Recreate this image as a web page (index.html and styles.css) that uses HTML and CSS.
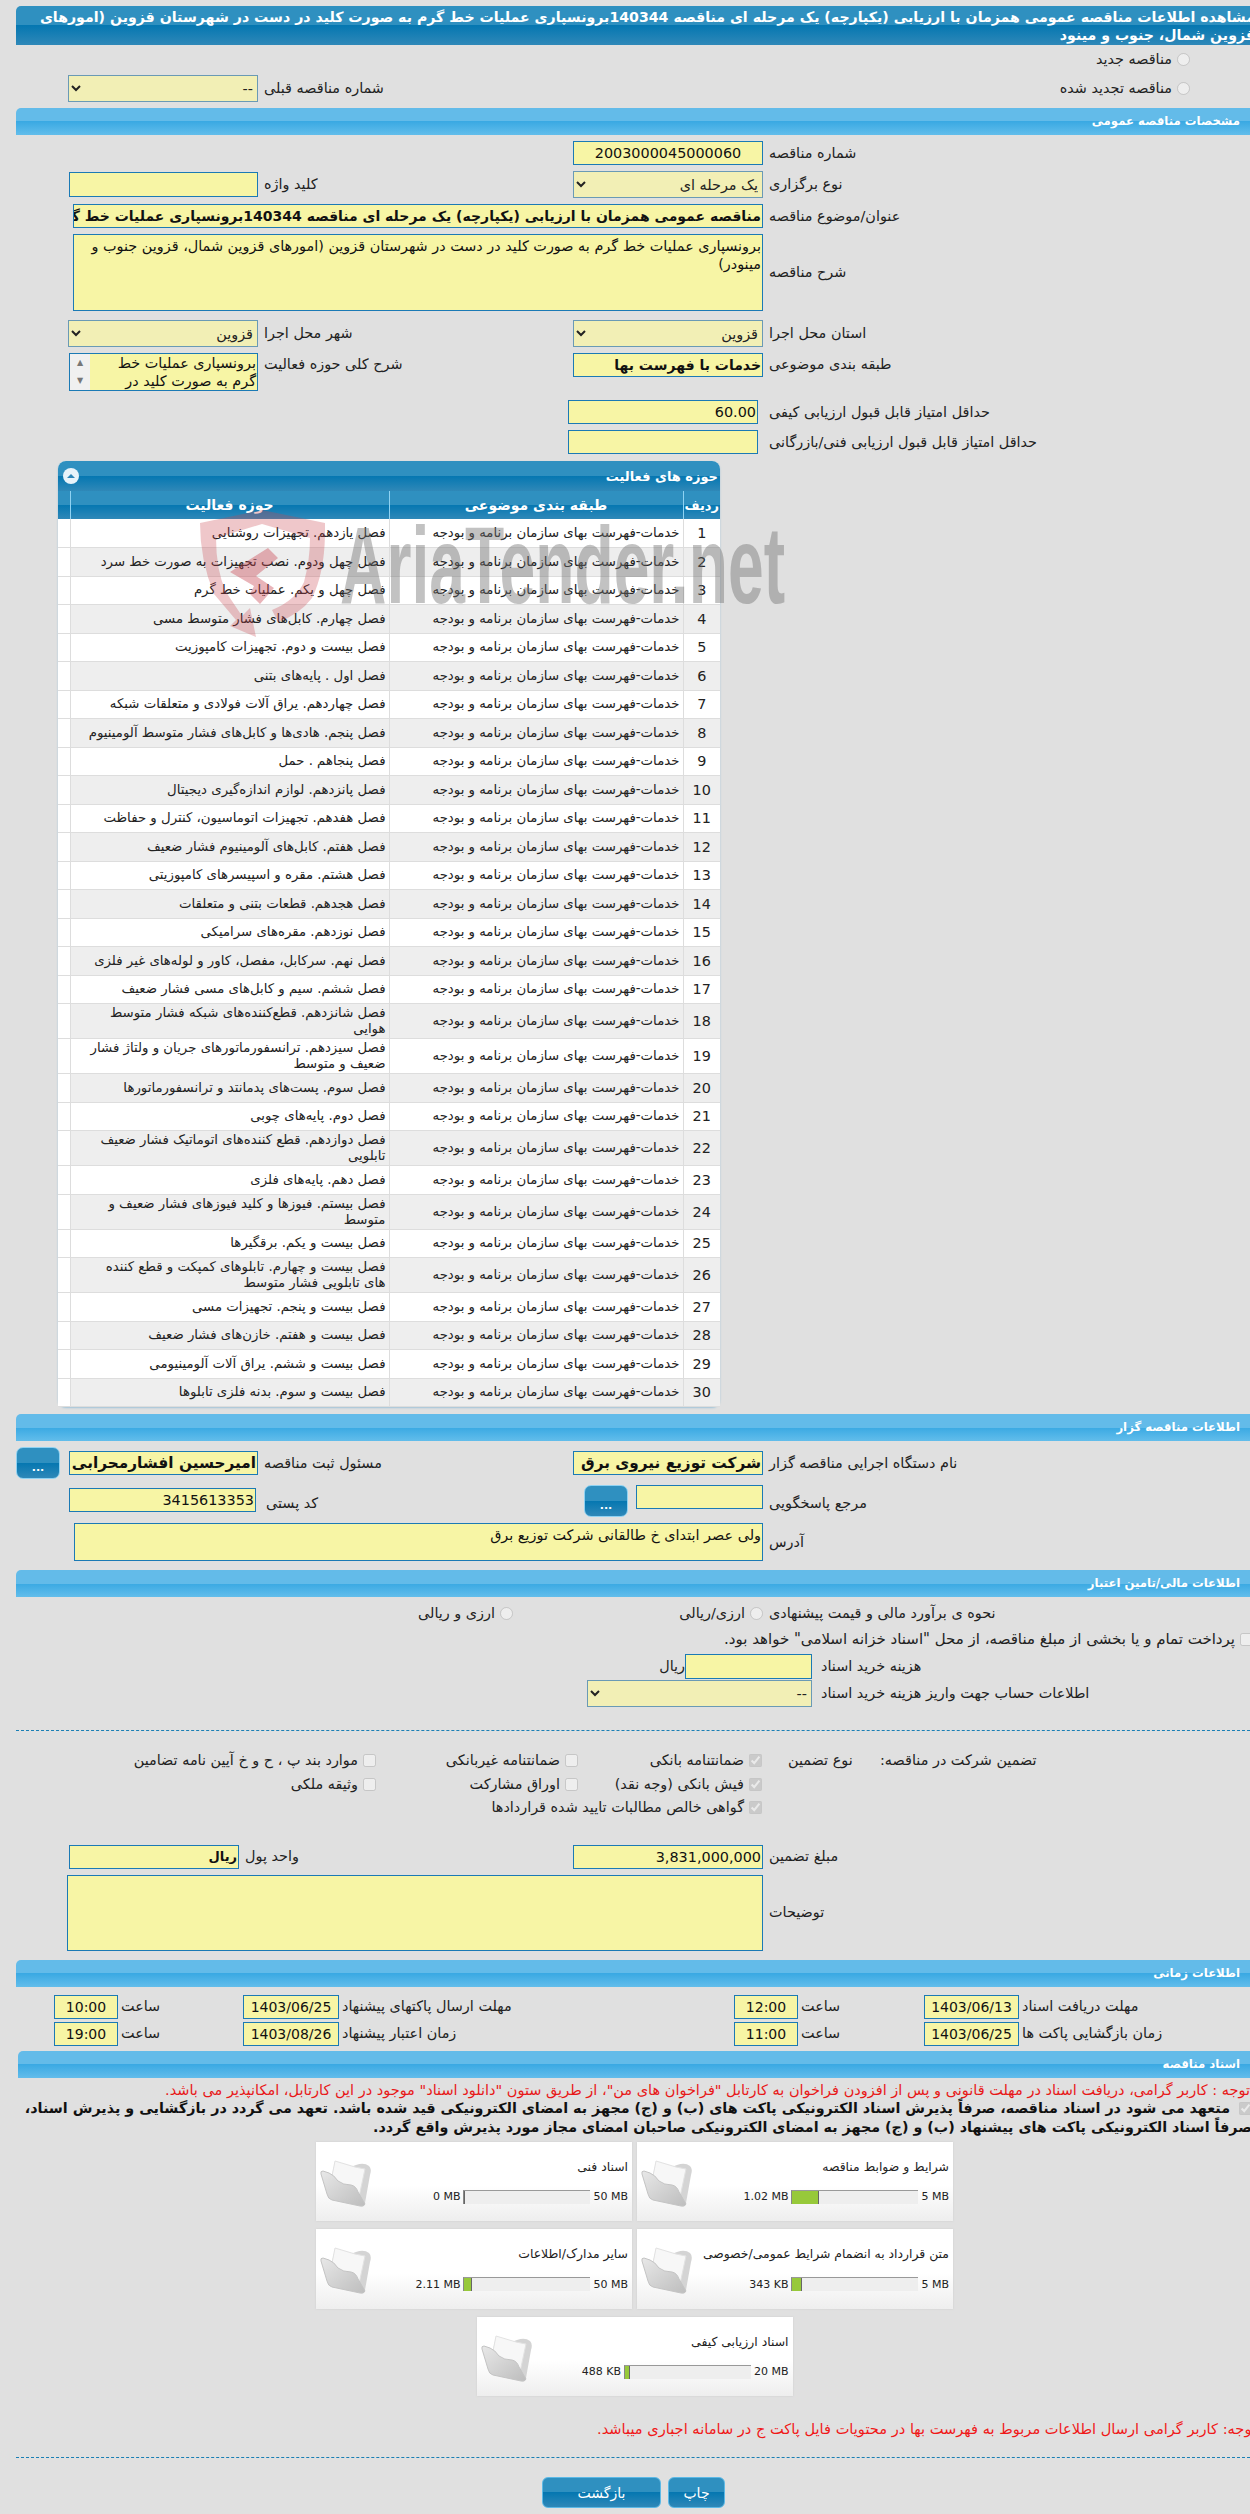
FILE: index.html
```html
<!DOCTYPE html>
<html lang="fa">
<head>
<meta charset="utf-8">
<title>مشاهده اطلاعات مناقصه</title>
<link rel="stylesheet" href="styles.css">
</head>
<body>
<svg class="defs" width="0" height="0" aria-hidden="true">
  <defs>
    <linearGradient id="fg" x1="0" y1="0" x2="1" y2="1"><stop offset="0" stop-color="#e8e8e8"/><stop offset="1" stop-color="#bdbdbd"/></linearGradient>
    <symbol id="folder" viewBox="0 0 54 48">
      <path d="M16 3 L28 7 Q33 8 37 6 Q45 3 50 7 Q53 10 51 16 L46 44 Q45 47 42 47 L34 40 L12 20 Z" fill="#d4d4d4"/>
      <path d="M16 2 L36 8 L46 10 L40 38 L12 22 Z" fill="#f7f7f7" stroke="#e2e2e2"/>
      <path d="M2 15 Q1 12 4 12 L10 14 Q15 16 19 22 Q24 26 32 26 Q37 27 39 33 L46 45 Q45 48 41 47 L13 41 Q9 40 8 35 Z" fill="url(#fg)" stroke="#c4c4c4"/>
    </symbol>
  </defs>
</svg>
<div class="page">
  <div class="title">مشاهده اطلاعات مناقصه عمومی همزمان با ارزیابی (یکپارچه) یک مرحله ای مناقصه 140344برونسپاری عملیات خط گرم به صورت کلید در دست در شهرستان قزوین (امورهای<br>قزوین شمال، جنوب و مینود</div>

  <div class="stack top">
    <div class="row radio-row"><span></span><span></span><span></span><label class="opt opt-wide"><input type="radio" disabled> مناقصه جدید</label></div>
    <div class="row">
      <select class="sel w190" disabled><option>--</option></select>
      <span class="lbl">شماره مناقصه قبلی</span>
      <span></span>
      <label class="opt opt-wide"><input type="radio" disabled> مناقصه تجدید شده</label>
    </div>
  </div>

  <div class="band first">مشخصات مناقصه عمومی</div>
  <div class="stack">
    <div class="row"><span></span><span></span><div class="fld w190 center">2003000045000060</div><span class="lbl">شماره مناقصه</span></div>
    <div class="row">
      <div class="fld w189 h25"></div><span class="lbl">کلید واژه</span>
      <select class="sel w190" disabled><option>یک مرحله ای</option></select><span class="lbl">نوع برگزاری</span>
    </div>
    <div class="row"><div class="fld span3 w690 bold">مناقصه عمومی همزمان با ارزیابی (یکپارچه) یک مرحله ای مناقصه 140344برونسپاری عملیات خط گرم به صورت کلید در دست در شهرستان قزوین</div><span class="lbl">عنوان/موضوع مناقصه</span></div>
    <div class="row mid"><div class="area span3 w690 h77">برونسپاری عملیات خط گرم به صورت کلید در دست در شهرستان قزوین (امورهای قزوین شمال، قزوین جنوب و مینودر)</div><span class="lbl">شرح مناقصه</span></div>
    <div class="row gap3">
      <select class="sel w190" disabled><option>قزوین</option></select><span class="lbl">شهر محل اجرا</span>
      <select class="sel w190" disabled><option>قزوین</option></select><span class="lbl">استان محل اجرا</span>
    </div>
    <div class="row start">
      <div class="listbox w189"><div class="lb-text">برونسپاری عملیات خط گرم به صورت کلید در</div><div class="lb-bar"><i>▲</i><i>▼</i></div></div><span class="lbl">شرح کلی حوزه فعالیت</span>
      <div class="fld w190 bold-md">خدمات با فهرست بها</div><span class="lbl">طبقه بندی موضوعی</span>
    </div>
    <div class="row gap3"><span></span><span></span><div class="fld w190 shift5">60.00</div><span class="lbl">حداقل امتیاز قابل قبول ارزیابی کیفی</span></div>
    <div class="row"><span></span><span></span><div class="fld w190 shift5"></div><span class="lbl">حداقل امتیاز قابل قبول ارزیابی فنی/بازرگانی</span></div>
  </div>

  <section class="panel">
    <div class="panel-head"><span>حوزه های فعالیت</span><svg class="collapse" viewBox="0 0 16 16" width="16" height="16"><circle cx="8" cy="8" r="8" fill="#e8f3fa"/><path d="M4 10 L8 6 L12 10 Z" fill="#2e86b8"/></svg></div>
    <table class="grid">
      <colgroup><col class="c-num"><col class="c-cat"><col class="c-act"><col class="c-gut"></colgroup>
      <thead><tr><th>ردیف</th><th>طبقه بندی موضوعی</th><th>حوزه فعالیت</th><th></th></tr></thead>
      <tbody>
        <tr><td>1</td><td>خدمات-فهرست بهای سازمان برنامه و بودجه</td><td>فصل یازدهم. تجهیزات روشنایی</td><td></td></tr>
        <tr><td>2</td><td>خدمات-فهرست بهای سازمان برنامه و بودجه</td><td>فصل چهل ودوم. نصب تجهیزات به صورت خط سرد</td><td></td></tr>
        <tr><td>3</td><td>خدمات-فهرست بهای سازمان برنامه و بودجه</td><td>فصل چهل و یکم. عملیات خط گرم</td><td></td></tr>
        <tr><td>4</td><td>خدمات-فهرست بهای سازمان برنامه و بودجه</td><td>فصل چهارم. کابل‌های فشار متوسط مسی</td><td></td></tr>
        <tr><td>5</td><td>خدمات-فهرست بهای سازمان برنامه و بودجه</td><td>فصل بیست و دوم. تجهیزات کامپوزیت</td><td></td></tr>
        <tr><td>6</td><td>خدمات-فهرست بهای سازمان برنامه و بودجه</td><td>فصل اول . پایه‌های بتنی</td><td></td></tr>
        <tr><td>7</td><td>خدمات-فهرست بهای سازمان برنامه و بودجه</td><td>فصل چهاردهم. یراق آلات فولادی و متعلقات شبکه</td><td></td></tr>
        <tr><td>8</td><td>خدمات-فهرست بهای سازمان برنامه و بودجه</td><td>فصل پنجم. هادی‌ها و کابل‌های فشار متوسط آلومینیوم</td><td></td></tr>
        <tr><td>9</td><td>خدمات-فهرست بهای سازمان برنامه و بودجه</td><td>فصل پنجاهم . حمل</td><td></td></tr>
        <tr><td>10</td><td>خدمات-فهرست بهای سازمان برنامه و بودجه</td><td>فصل پانزدهم. لوازم اندازه‌گیری دیجیتال</td><td></td></tr>
        <tr><td>11</td><td>خدمات-فهرست بهای سازمان برنامه و بودجه</td><td>فصل هفدهم. تجهیزات اتوماسیون، کنترل و حفاظت</td><td></td></tr>
        <tr><td>12</td><td>خدمات-فهرست بهای سازمان برنامه و بودجه</td><td>فصل هفتم. کابل‌های آلومینیوم فشار ضعیف</td><td></td></tr>
        <tr><td>13</td><td>خدمات-فهرست بهای سازمان برنامه و بودجه</td><td>فصل هشتم. مقره و اسپیسرهای کامپوزیتی</td><td></td></tr>
        <tr><td>14</td><td>خدمات-فهرست بهای سازمان برنامه و بودجه</td><td>فصل هجدهم. قطعات بتنی و متعلقات</td><td></td></tr>
        <tr><td>15</td><td>خدمات-فهرست بهای سازمان برنامه و بودجه</td><td>فصل نوزدهم. مقره‌های سرامیکی</td><td></td></tr>
        <tr><td>16</td><td>خدمات-فهرست بهای سازمان برنامه و بودجه</td><td>فصل نهم. سرکابل، مفصل، کاور و لوله‌های غیر فلزی</td><td></td></tr>
        <tr><td>17</td><td>خدمات-فهرست بهای سازمان برنامه و بودجه</td><td>فصل ششم. سیم و کابل‌های مسی فشار ضعیف</td><td></td></tr>
        <tr><td>18</td><td>خدمات-فهرست بهای سازمان برنامه و بودجه</td><td>فصل شانزدهم. قطع‌کننده‌های شبکه فشار متوسط<br>هوایی</td><td></td></tr>
        <tr><td>19</td><td>خدمات-فهرست بهای سازمان برنامه و بودجه</td><td>فصل سیزدهم. ترانسفورماتورهای جریان و ولتاژ فشار<br>ضعیف و متوسط</td><td></td></tr>
        <tr><td>20</td><td>خدمات-فهرست بهای سازمان برنامه و بودجه</td><td>فصل سوم. پست‌های پدمانتد و ترانسفورماتورها</td><td></td></tr>
        <tr><td>21</td><td>خدمات-فهرست بهای سازمان برنامه و بودجه</td><td>فصل دوم. پایه‌های چوبی</td><td></td></tr>
        <tr><td>22</td><td>خدمات-فهرست بهای سازمان برنامه و بودجه</td><td>فصل دوازدهم. قطع کننده‌های اتوماتیک فشار ضعیف<br>تابلویی</td><td></td></tr>
        <tr><td>23</td><td>خدمات-فهرست بهای سازمان برنامه و بودجه</td><td>فصل دهم. پایه‌های فلزی</td><td></td></tr>
        <tr><td>24</td><td>خدمات-فهرست بهای سازمان برنامه و بودجه</td><td>فصل بیستم. فیوزها و کلید فیوزهای فشار ضعیف و<br>متوسط</td><td></td></tr>
        <tr><td>25</td><td>خدمات-فهرست بهای سازمان برنامه و بودجه</td><td>فصل بیست و یکم. برقگیرها</td><td></td></tr>
        <tr><td>26</td><td>خدمات-فهرست بهای سازمان برنامه و بودجه</td><td>فصل بیست و چهارم. تابلوهای کمپکت و قطع کننده<br>های تابلویی فشار متوسط</td><td></td></tr>
        <tr><td>27</td><td>خدمات-فهرست بهای سازمان برنامه و بودجه</td><td>فصل بیست و پنجم. تجهیزات مسی</td><td></td></tr>
        <tr><td>28</td><td>خدمات-فهرست بهای سازمان برنامه و بودجه</td><td>فصل بیست و هفتم. خازن‌های فشار ضعیف</td><td></td></tr>
        <tr><td>29</td><td>خدمات-فهرست بهای سازمان برنامه و بودجه</td><td>فصل بیست و ششم. یراق آلات آلومینیومی</td><td></td></tr>
        <tr><td>30</td><td>خدمات-فهرست بهای سازمان برنامه و بودجه</td><td>فصل بیست و سوم. بدنه فلزی تابلوها</td><td></td></tr>
      </tbody>
    </table>
    <div class="wm">
      <svg class="wm-shield" viewBox="0 0 125 128" width="125" height="128" aria-hidden="true">
        <path d="M62 0 L125 13 Q126 60 112 88 Q100 104 78 112 L72 100 Q96 90 104 72 Q110 50 110 28 L62 14 L16 28 Q16 60 26 82 L42 106 L50 98 L56 127 L30 116 L36 110 L14 84 Q0 50 0 13 Z" fill="#c9444f" opacity=".3"/>
        <path d="M68 38 L78 48 L56 66 L74 78 L60 94 L50 84 L54 76 L30 62 Z" fill="#c9444f" opacity=".4"/>
      </svg>
      <span class="wm-text">AriaTender.net</span>
    </div>
  </section>

  <div class="band after-panel">اطلاعات مناقصه گزار</div>
  <div class="stack">
    <div class="row btn-row">
      <div class="pair-left"><button class="dots">...</button><div class="fld w189 bold-lg">امیرحسین افشارمحرابی</div></div><span class="lbl">مسئول ثبت مناقصه</span>
      <div class="fld w190 bold-lg">شرکت توزیع نیروی برق</div><span class="lbl">نام دستگاه اجرایی مناقصه گزار</span>
    </div>
    <div class="row start low">
      <div class="fld w187 shift2 drop3">3415613353</div><span class="lbl lbl-wide">کد پستی</span>
      <div class="pair-right"><button class="dots">...</button><div class="fld w127"></div></div><span class="lbl">مرجع پاسخگویی</span>
    </div>
    <div class="row"><div class="area span3 w689 h38">ولی عصر ابتدای خ طالقانی شرکت توزیع برق</div><span class="lbl">آدرس</span></div>
  </div>

  <div class="band">اطلاعات مالی/تامین اعتبار</div>
  <div class="fin">
    <div class="row mode">
      <span></span><span class="opt radio-mixed"><input type="radio" disabled> ارزی و ریالی</span>
      <span class="opt"><input type="radio" disabled> ارزی/ریالی</span><span class="lbl">نحوه ی برآورد مالی و قیمت پیشنهادی</span>
    </div>
    <label class="opt pay"><input type="checkbox" disabled> پرداخت تمام و یا بخشی از مبلغ مناقصه، از محل "اسناد خزانه اسلامی" خواهد بود.</label>
    <div class="buy">
      <div class="buy-row"><div class="buy-field"><span class="unit">ریال</span><div class="fld w127"></div></div><span class="lbl">هزینه خرید اسناد</span></div>
      <div class="buy-row"><div class="buy-field"><select class="sel w225" disabled><option>--</option></select></div><span class="lbl">اطلاعات حساب جهت واریز هزینه خرید اسناد</span></div>
    </div>
  </div>
  <hr class="dash">

  <div class="guar">
    <div class="g-row">
      <label class="g-item"><input type="checkbox" disabled> موارد بند پ ، ح و خ آیین نامه تضامین</label>
      <label class="g-item"><input type="checkbox" disabled> ضمانتنامه غیربانکی</label>
      <label class="g-item"><input type="checkbox" checked disabled> ضمانتنامه بانکی</label>
      <span class="g-type">نوع تضمین</span><span class="g-head">تضمین شرکت در مناقصه:</span>
    </div>
    <div class="g-row">
      <label class="g-item"><input type="checkbox" disabled> وثیقه ملکی</label>
      <label class="g-item"><input type="checkbox" disabled> اوراق مشارکت</label>
      <label class="g-item"><input type="checkbox" checked disabled> فیش بانکی (وجه نقد)</label>
    </div>
    <div class="g-row">
      <span></span><span></span>
      <label class="g-item"><input type="checkbox" checked disabled> گواهی خالص مطالبات تایید شده قراردادها</label>
    </div>
  </div>

  <div class="stack amount">
    <div class="row">
      <div class="fld w170 shift19 bold-sm">ریال</div><span class="lbl lbl-pull">واحد پول</span>
      <div class="fld w190">3,831,000,000</div><span class="lbl">مبلغ تضمین</span>
    </div>
    <div class="row mid"><div class="area span3 w696 h76"></div><span class="lbl">توضیحات</span></div>
  </div>

  <div class="band">اطلاعات زمانی</div>
  <div class="dates">
    <div class="d-row">
      <div class="fld center">10:00</div><span class="lbl">ساعت</span>
      <div class="fld center">1403/06/25</div><span class="lbl">مهلت ارسال پاکتهای پیشنهاد</span>
      <div class="fld center">12:00</div><span class="lbl">ساعت</span>
      <div class="fld center">1403/06/13</div><span class="lbl">مهلت دریافت اسناد</span>
    </div>
    <div class="d-row">
      <div class="fld center">19:00</div><span class="lbl">ساعت</span>
      <div class="fld center">1403/08/26</div><span class="lbl">زمان اعتبار پیشنهاد</span>
      <div class="fld center">11:00</div><span class="lbl">ساعت</span>
      <div class="fld center">1403/06/25</div><span class="lbl">زمان بازگشایی پاکت ها</span>
    </div>
  </div>

  <div class="band inset">اسناد مناقصه</div>
  <p class="note-red">توجه : کاربر گرامی، دریافت اسناد در مهلت قانونی و پس از افزودن فراخوان به کارتابل "فراخوان های من"، از طریق ستون "دانلود اسناد" موجود در این کارتابل، امکانپذیر می باشد.</p>
  <p class="pledge"><input type="checkbox" checked disabled> متعهد می شود در اسناد مناقصه، صرفاً پذیرش اسناد الکترونیکی پاکت های (ب) و (ج) مجهز به امضای الکترونیکی قید شده باشد. تعهد می گردد در بازگشایی و پذیرش اسناد،<br>صرفاً اسناد الکترونیکی پاکت های پیشنهاد (ب) و (ج) مجهز به امضای الکترونیکی صاحبان امضای مجاز مورد پذیرش واقع گردد.</p>

  <div class="cards">
    <article class="card"><svg class="folder" width="54" height="48"><use href="#folder"/></svg><div class="c-body"><h4>شرایط و ضوابط مناقصه</h4><div class="c-bar"><span>1.02 MB</span><div class="track"><div class="fill" style="width:20.4%"></div></div><span>5 MB</span></div></div></article>
    <article class="card"><svg class="folder" width="54" height="48"><use href="#folder"/></svg><div class="c-body"><h4>اسناد فنی</h4><div class="c-bar"><span>0 MB</span><div class="track"><div class="fill" style="width:0"></div></div><span>50 MB</span></div></div></article>
    <article class="card"><svg class="folder" width="54" height="48"><use href="#folder"/></svg><div class="c-body"><h4>متن قرارداد به انضمام شرایط عمومی/خصوصی</h4><div class="c-bar"><span>343 KB</span><div class="track"><div class="fill" style="width:6.7%"></div></div><span>5 MB</span></div></div></article>
    <article class="card"><svg class="folder" width="54" height="48"><use href="#folder"/></svg><div class="c-body"><h4>سایر مدارک/اطلاعات</h4><div class="c-bar"><span>2.11 MB</span><div class="track"><div class="fill" style="width:5%"></div></div><span>50 MB</span></div></div></article>
    <article class="card"><svg class="folder" width="54" height="48"><use href="#folder"/></svg><div class="c-body"><h4>اسناد ارزیابی کیفی</h4><div class="c-bar"><span>488 KB</span><div class="track"><div class="fill" style="width:3%"></div></div><span>20 MB</span></div></div></article>
  </div>

  <p class="note-end">توجه: کاربر گرامی ارسال اطلاعات مربوط به فهرست بها در محتویات فایل پاکت ج در سامانه اجباری میباشد.</p>
  <hr class="dash end">
  <div class="actions"><button class="btn back">بازگشت</button><button class="btn print">چاپ</button></div>
</div>
</body>
</html>
```
FILE: styles.css
```css
html, body { margin: 0; padding: 0; }
html { background: #e0e0e0; }
body { width: 1250px; height: 2514px; overflow: hidden; font-family: "DejaVu Sans", sans-serif; font-size: 14.4px; color: #222; line-height: 15px; }
.defs { position: absolute; }
.page { width: 1244px; margin-left: 16px; padding-top: 6px; direction: rtl; }

.title { height: 39px; box-sizing: border-box; padding: 2px 5px 0 0; color: #fff; font-size: 14.15px; font-weight: bold; line-height: 18px; white-space: nowrap; overflow: hidden; border-radius: 5px 0 0 0;
  background: linear-gradient(#2f90c0 0, #2f90c0 50%, #0577b1 50%, #2f88b8 100%); }
.band { height: 27px; box-sizing: border-box; padding: 6px 20px 0 0; color: #fff; font-size: 11.7px; font-weight: bold; line-height: 15px; margin-top: 9px; border-radius: 5px 0 0 0;
  background: linear-gradient(#63bbe9 0, #63bbe9 50%, #3aa9e3 50%, #62bdeb 100%); }
.band.first { margin-top: 6px; }
.band.after-panel { margin-top: 7px; }
.band.inset { margin: 5px 0 0 2px; }

.stack { display: flex; flex-direction: column; gap: 6px; padding-top: 6px; }
.top { gap: 4px; padding-top: 2px; }
.row { display: grid; grid-template-columns: 242px 315px 190px 1fr; direction: ltr; align-items: center; }
.row.start { align-items: start; }
.row.start .lbl { margin-top: 4px; }
.row.low .lbl { margin-top: 11px; }
.row.gap3 { margin-top: 3px; }
.radio-row { height: 24px; }
.lbl { direction: rtl; text-align: left; padding-left: 6px; white-space: nowrap; }
.fld, .area, .listbox { box-sizing: border-box; background: #f7f5a5; border: 1px solid #1b7ab5; direction: rtl; justify-self: end; color: #111; }
.fld { height: 24px; line-height: 22px; overflow: hidden; white-space: nowrap; padding: 0 1px; }
.h25 { height: 25px; }
.area { padding: 2px 1px; line-height: 18px; }
.bold { font-weight: bold; font-size: 14px; }
.bold-lg { font-weight: bold; font-size: 15.3px; }
.bold-md { font-weight: bold; font-size: 14px; }
.bold-sm { font-weight: bold; font-size: 13px; }
.center { text-align: center; }
.sel { box-sizing: border-box; height: 27px; background-color: #f2efb5; border: 1px solid #6a9ab5; justify-self: end; direction: rtl; font: inherit; font-size: 14.4px; color: #222; opacity: 1; }
.w190 { width: 190px; } .w189 { width: 189px; } .w187 { width: 187px; } .w127 { width: 127px; } .w170 { width: 170px; } .w225 { width: 225px; }
.w690 { width: 690px; } .w689 { width: 689px; } .w696 { width: 696px; }
.h77 { height: 77px; } .h38 { height: 38px; } .h76 { height: 76px; }
.span3 { grid-column: 1 / 4; }
.shift5 { margin-right: 5px; }
.shift2 { margin-right: 2px; }
.shift19 { margin-right: 19px; }
.drop3 { margin-top: 3px; }
.lbl-pull { margin-left: -19px; }
.lbl-wide { padding-left: 8px; }
.opt { direction: rtl; display: flex; align-items: center; gap: 5px; white-space: nowrap; }
.opt input { margin: 0; }
.opt-wide { width: 427px; justify-self: start; }

.listbox { height: 38px; display: flex; overflow: hidden; line-height: 18px; }
.lb-text { flex: 1; padding: 0 1px; }
.lb-bar { width: 20px; background: #f0f0f0; display: flex; flex-direction: column; justify-content: space-around; align-items: center; font-size: 8px; color: #777; }
.lb-bar i { font-style: normal; line-height: 10px; }

.panel { position: relative; width: 662px; margin: 7px auto 0 42px; border-radius: 8px; background: #fff; box-shadow: 0 1px 2px #9fc3d8; }
.panel-head { height: 30px; box-sizing: border-box; display: flex; justify-content: space-between; align-items: center; padding: 0 2px 0 5px; color: #fff; font-weight: bold; font-size: 13px; border-radius: 8px 8px 0 0;
  background: linear-gradient(#2f90c0 0, #2f90c0 50%, #0577b1 50%, #2f88b8 100%); }
.grid { width: 662px; border-collapse: collapse; table-layout: fixed; background: #fff; }
.c-num { width: 37px; } .c-cat { width: 294px; } .c-act { width: 319px; } .c-gut { width: 12px; }
.grid th { height: 28px; padding: 0; color: #fff; font-size: 14px; font-weight: bold; border-left: 1px solid #8fd2f2; text-align: center;
  background: linear-gradient(#2f90c0 0, #2f90c0 50%, #0577b1 50%, #2f88b8 100%); }
.grid th:first-child { font-size: 13px; }
.grid th:last-child { border-left: 0; }
.grid td { height: 28.5px; box-sizing: border-box; padding: 1px 3px; line-height: 16px; border-bottom: 1px solid #ddd; border-left: 1px solid #ddd; font-size: 13.3px; vertical-align: middle; }
.grid td:first-child { text-align: center; font-size: 14.4px; }
.grid tbody tr:nth-child(even) td { background: #eee; }
.grid tbody tr td:last-child { background: #fff; border-left: 0; }
.wm { position: absolute; left: 142px; top: 49px; direction: ltr; pointer-events: none; display: flex; }
.wm-shield { flex: none; }
.wm-text { position: absolute; left: 140px; top: 0; font-family: "Liberation Sans", sans-serif; font-weight: bold; font-size: 110px; line-height: 110px; color: rgba(110,110,110,.42); transform: scaleX(.584); transform-origin: left top; white-space: nowrap; }

.btn-row { height: 32px; }
.pair-left, .pair-right { display: flex; direction: ltr; align-items: center; justify-content: space-between; }
.pair-right { gap: 8px; justify-content: flex-end; align-items: flex-start; }
.dots { width: 44px; height: 32px; border: 1px solid #8fd2f2; border-radius: 7px; color: #fff; font-size: 11px; font-weight: bold; padding: 8px 0 0; font-family: inherit;
  background: linear-gradient(#2f90c0 0, #2f90c0 50%, #0577b1 50%, #2f88b8 100%); }

.fin { padding-top: 4px; }
.mode { height: 24px; }
.radio-mixed { justify-self: end; margin-right: 60px; }
.pay { margin: 4px 7px 0 0; height: 20px; font-size: 15px; }
.buy { padding-top: 5px; display: flex; flex-direction: column; gap: 1px; direction: ltr; }
.buy-row { display: grid; grid-template-columns: 796px 1fr; align-items: center; }
.buy-field { display: flex; justify-content: flex-end; align-items: center; min-height: 25px; }
.buy-field .fld { height: 25px; }
.buy-row .lbl { padding-left: 9px; }
.unit { direction: rtl; }
.dash { border: 0; border-top: 1px dashed #1a7fb5; margin: 23px auto 0 0; width: 1234px; }
.dash.end { margin-top: 20px; }

.guar { padding-top: 18px; }
.g-row { display: grid; grid-template-columns: 360px 202px 184px 1fr; direction: ltr; height: 23.5px; align-items: center; }
.g-item { direction: rtl; display: flex; gap: 5px; align-items: center; white-space: nowrap; }
.g-item input { margin: 0; }
.g-type { grid-column: 4; grid-row: 1; direction: rtl; justify-self: start; margin-left: 26px; }
.g-head { grid-column: 4; grid-row: 1; direction: rtl; margin-left: 118px; justify-self: start; white-space: nowrap; }

.stack.amount { padding-top: 25px; }
.dates { padding: 8px 0 0 38px; display: flex; flex-direction: column; gap: 3px; }
.d-row { display: grid; grid-template-columns: 64px 125px 96px 395px 64px 126px 95px 1fr; direction: ltr; align-items: center; }
.d-row .lbl { padding-left: 3px; }
.d-row .fld { width: 100%; direction: ltr; font-size: 14px; }

.note-red { margin: 5px 10px 0 0; color: #e81818; font-size: 14.5px; white-space: nowrap; height: 15px; }
.pledge { margin: 1px 8px 0 0; font-weight: bold; font-size: 14.3px; color: #111; line-height: 19.5px; white-space: nowrap; }
.pledge input { margin: 0 0 0 4px; vertical-align: middle; }

.cards { width: 637px; margin: 4px auto 0 300px; display: flex; flex-wrap: wrap; justify-content: center; gap: 8px 5px; }
.card { width: 316px; height: 79.5px; box-sizing: border-box; display: flex; direction: ltr; padding: 17px 4px 0 3px; background: linear-gradient(#fff 55%, #eee 100%); box-shadow: 0 0 2px #ccc; }
.folder { flex: none; }
.c-body { flex: 1; direction: rtl; }
.c-body h4 { margin: 0; font-size: 12.4px; font-weight: normal; height: 31px; }
.c-bar { display: flex; direction: ltr; justify-content: flex-end; align-items: center; gap: 3px; height: 14px; font-size: 11px; }
.track { width: 127px; height: 14px; box-sizing: border-box; background: #eee; border-top: 1px solid #999; border-left: 1px solid #888; }
.fill { height: 100%; background: #97c93a; border-right: 1px solid #666; }

.note-end { margin: 25px 4px 0 0; color: #f01818; font-size: 14.6px; white-space: nowrap; height: 16px; }
.actions { display: flex; direction: ltr; gap: 7px; padding: 19px 0 0 526px; }
.btn { height: 31px; border: 1px solid #5cb9e6; border-radius: 6px; color: #fff; font-family: inherit; font-size: 14px;
  background: linear-gradient(#2f90c0 0, #2f90c0 50%, #0577b1 50%, #2f88b8 100%); }
.back { width: 119px; } .print { width: 57px; }
```
